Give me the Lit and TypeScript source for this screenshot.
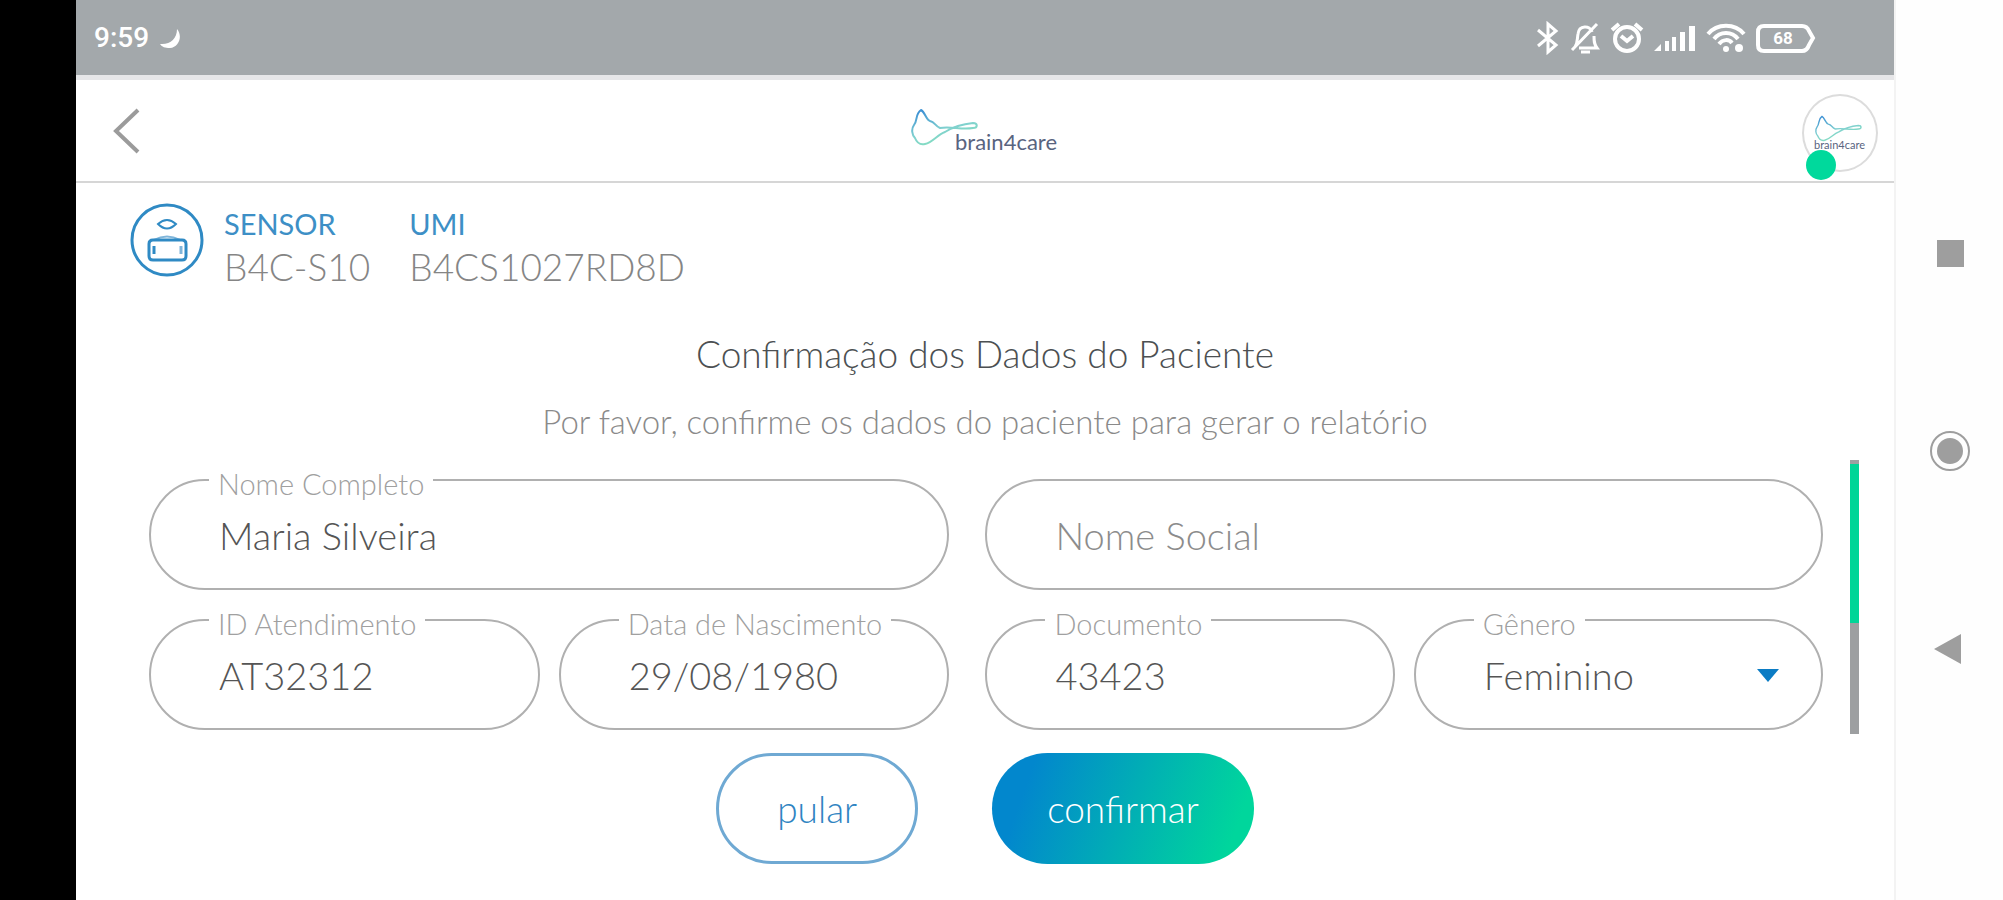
import { LitElement, html, css, svg } from "lit";

/* Brand curve shared by the header logo and the avatar */
const brandCurve = svg`
  <path
    d="M10 2 C4 6 7 12 3 17 C0 21 1 27 4 30 C6 35 10 37 14 36 C22 34 26 27 34 24 C42 19 52 16 62 15 C67 15 67 20 62 20 C50 22 40 18 29 20 C24 18 24 14 19 13 C15 12 14 4 10 2 Z"
    fill="none" stroke="url(#curve)" stroke-width="2" stroke-linejoin="round" />`;

const curveGradient = svg`
  <defs>
    <linearGradient id="curve" x1="0" y1="0" x2="0.5" y2="1">
      <stop offset="0.1" stop-color="#3f93d4" />
      <stop offset="0.6" stop-color="#7fcfd0" />
      <stop offset="1" stop-color="#86e0bf" />
    </linearGradient>
  </defs>`;

class StatusBar extends LitElement {
  static styles = css`
    :host {
      display: flex;
      align-items: center;
      justify-content: space-between;
      height: 75px;
      padding: 0 78px 0 18px;
      background: #a3a8ab;
      color: #fff;
      font: 500 28px/32px Roboto, sans-serif;
    }
    .group {
      display: flex;
      align-items: center;
      gap: 10px;
    }
    svg {
      display: block;
    }
  `;

  render() {
    return html`
      <div class="group">
        <span>9:59</span>
        <svg width="22" height="22" viewBox="0 0 22 22" fill="#fff">
          <path d="M18 2 C24 9 20 20 11 21 C6 21 3 20 1 17 C11 18 18 12 18 2Z" />
        </svg>
      </div>
      <div class="group">
        <svg width="24" height="34" viewBox="0 0 24 34" fill="none" stroke="#fff" stroke-width="3">
          <path d="M2 9 L20 24 L12 31 V3 L20 10 L2 25" />
        </svg>
        <svg width="30" height="34" viewBox="0 0 30 34" fill="none" stroke="#fff" stroke-width="3">
          <path d="M5 26 C8 21 7 18 8 13 C9 4 20 4 22 11 M24 15 C24 20 24 23 27 27 H9 M27 3 L2 29" />
          <path d="M11 31 H20" />
        </svg>
        <svg width="34" height="34" viewBox="0 0 34 34" fill="none" stroke="#fff" stroke-width="4">
          <circle cx="17" cy="18" r="12" />
          <path d="M2 9 L9 3 M25 3 L32 9 M11 15 L17 20 L23 15" />
        </svg>
        <svg width="42" height="34" viewBox="0 0 42 34" fill="#fff">
          <path d="M0 30 L7 23 V30Z M11 20 H15 V30 H11Z M18 16 H22 V30 H18Z M26 11 H31 V30 H26Z M35 5 H41 V30 H35Z" />
        </svg>
        <svg width="40" height="34" viewBox="0 0 40 34" fill="none" stroke="#fff" stroke-width="4">
          <path d="M2 13 C11 2 29 2 38 13 M8 18 C14 10 26 10 32 18 M13 23 C17 18 23 18 26 22" />
          <circle cx="20" cy="28" r="3" fill="#fff" stroke="none" />
          <circle cx="33" cy="27" r="4" fill="#fff" stroke="none" />
        </svg>
        <svg width="60" height="34" viewBox="0 0 60 34" fill="none" stroke="#fff" stroke-width="4">
          <path d="M8 5 H46 Q51 5 53 10 L57 17 L53 24 Q51 30 46 30 H8 Q2 30 2 24 V11 Q2 5 8 5Z" />
          <text x="27" y="23" text-anchor="middle" fill="#fff" stroke="none" font-size="17" font-weight="700">68</text>
        </svg>
      </div>
    `;
  }
}
customElements.define("status-bar", StatusBar);

class AppHeader extends LitElement {
  static styles = css`
    :host {
      display: grid;
      grid-template-columns: 1fr auto 1fr;
      align-items: center;
      height: 108px;
      padding: 0 16px 0 28px;
      box-sizing: border-box;
      border-top: 5px solid #e6e6e8;
      border-bottom: 2px solid #d6d6d6;
    }
    button {
      display: grid;
      justify-self: start;
      padding: 8px;
      border: 0;
      background: none;
    }
    svg {
      display: block;
    }
    .avatar {
      position: relative;
      justify-self: end;
      align-self: end;
      display: grid;
      place-items: center;
      width: 76px;
      height: 78px;
      margin-bottom: 9px;
      box-sizing: border-box;
      border: 2px solid #dcdcdc;
      border-radius: 50%;
    }
    .online {
      position: absolute;
      left: 2px;
      bottom: -10px;
      width: 30px;
      height: 30px;
      border-radius: 50%;
      background: #00d99c;
    }
    .logo {
      margin-right: 12px;
    }
    text {
      font: 400 22px Lato, sans-serif;
      fill: #59647f;
    }
  `;

  render() {
    return html`
      <button aria-label="Voltar">
        <svg width="28" height="46" viewBox="0 0 28 46" fill="none" stroke="#9b9b9b" stroke-width="4">
          <path d="M26 2 L4 23 L26 44" />
        </svg>
      </button>
      <svg class="logo" width="148" height="46" viewBox="0 0 148 46">
        ${curveGradient}${brandCurve}
        <text x="44" y="42">brain4care</text>
      </svg>
      <div class="avatar">
        <svg width="56" height="38" viewBox="0 0 112 76">
          ${curveGradient}
          <g transform="translate(6 2) scale(1.4)">${brandCurve}</g>
          <text x="4" y="70">brain4care</text>
        </svg>
        <span class="online"></span>
      </div>
    `;
  }
}
customElements.define("app-header", AppHeader);

class SensorInfo extends LitElement {
  static styles = css`
    :host {
      display: flex;
      align-items: flex-start;
      gap: 19px;
      font: 300 37px/44px Lato, sans-serif;
      color: #858585;
    }
    svg {
      display: block;
    }
    dl {
      display: flex;
      gap: 39px;
      margin: 0;
    }
    dt {
      font: 400 29px/42px Lato, sans-serif;
      color: #3d8fc6;
    }
    dd {
      margin: 0;
    }
  `;

  render() {
    return html`
      <svg width="75" height="75" viewBox="0 0 75 75" fill="none" stroke="#2f8ac4" stroke-width="3">
        <circle cx="37" cy="37" r="35" />
        <path d="M28 21 Q37 13 46 21 Q37 30 28 21Z" stroke-width="2" />
        <path d="M24 37 Q37 30 50 37" stroke-width="2" stroke="#7fb5da" />
        <path d="M23 37 H52 Q56 37 56 41 V53 Q56 57 52 57 H23 Q19 57 19 53 V41 Q19 37 23 37Z" />
        <path d="M24 43 V51" />
        <path d="M51 43 V51" stroke="#7fb5da" />
      </svg>
      <dl>
        <div><dt>SENSOR</dt><dd>B4C-S10</dd></div>
        <div><dt>UMI</dt><dd>B4CS1027RD8D</dd></div>
      </dl>
    `;
  }
}
customElements.define("sensor-info", SensorInfo);

class PatientForm extends LitElement {
  static styles = css`
    :host {
      display: flex;
      gap: 27px;
      padding: 0 35px 0 73px;
    }
    .fields {
      flex: 1;
      display: grid;
      grid-template-columns: 800fr 837fr;
      gap: 29px 36px;
      padding: 19px 0 4px;
    }
    .pair {
      display: grid;
      grid-template-columns: 1fr 1fr;
      gap: 19px;
    }
    .field {
      position: relative;
      min-width: 0;
    }
    label {
      position: absolute;
      left: 60px;
      top: -13px;
      padding: 0 9px;
      background: #fff;
      color: #a0a0a0;
      font: 300 29px/36px Lato, sans-serif;
      white-space: nowrap;
    }
    input,
    select {
      display: block;
      width: 100%;
      height: 111px;
      box-sizing: border-box;
      margin: 0;
      padding: 0 68px;
      border: 2px solid #b0b0b0;
      border-radius: 56px;
      background: #fff;
      color: #555;
      font: 300 38px/44px Lato, sans-serif;
      appearance: none;
      outline: none;
    }
    input::placeholder {
      color: #8c8c8c;
      opacity: 1;
    }
    .arrow {
      position: absolute;
      right: 44px;
      top: 50px;
      pointer-events: none;
    }
    .track {
      width: 9px;
      padding-top: 4px;
      box-sizing: border-box;
      background: #9d9fa1;
    }
    .thumb {
      height: 59%;
      background: #00d597;
    }
  `;

  render() {
    return html`
      <div class="fields">
        <div class="field">
          <input id="name" value="Maria Silveira" />
          <label for="name">Nome Completo</label>
        </div>
        <div class="field">
          <input id="social" placeholder="Nome Social" aria-label="Nome Social" />
        </div>
        <div class="pair">
          <div class="field">
            <input id="visit" value="AT32312" />
            <label for="visit">ID Atendimento</label>
          </div>
          <div class="field">
            <input id="birth" value="29/08/1980" />
            <label for="birth">Data de Nascimento</label>
          </div>
        </div>
        <div class="pair">
          <div class="field">
            <input id="document" value="43423" />
            <label for="document">Documento</label>
          </div>
          <div class="field">
            <select id="gender">
              <option>Feminino</option>
            </select>
            <label for="gender">Gênero</label>
            <svg class="arrow" width="22" height="13" viewBox="0 0 22 13">
              <path d="M0 0 H22 L11 13Z" fill="#0b7cc4" />
            </svg>
          </div>
        </div>
      </div>
      <div class="track"><div class="thumb"></div></div>
    `;
  }
}
customElements.define("patient-form", PatientForm);

class NavRail extends LitElement {
  static styles = css`
    :host {
      display: flex;
      flex-direction: column;
      align-items: center;
      gap: 158px;
      padding-top: 233px;
    }
    button {
      display: grid;
      padding: 0;
      border: 0;
      background: none;
    }
  `;

  render() {
    return html`
      <button aria-label="Recentes">
        <svg width="40" height="40" viewBox="0 0 40 40"><path d="M7 7 H34 V34 H7Z" fill="#9e9e9e" /></svg>
      </button>
      <button aria-label="Início">
        <svg width="40" height="40" viewBox="0 0 40 40">
          <circle cx="20" cy="20" r="19" fill="none" stroke="#9e9e9e" stroke-width="2" />
          <circle cx="20" cy="20" r="13" fill="#9e9e9e" />
        </svg>
      </button>
      <button aria-label="Voltar">
        <svg width="40" height="40" viewBox="0 0 40 40"><path d="M4 20 L31 5 V35Z" fill="#9e9e9e" /></svg>
      </button>
    `;
  }
}
customElements.define("nav-rail", NavRail);

class AppRoot extends LitElement {
  static styles = css`
    :host {
      display: grid;
      grid-template-columns: 76px 1fr 107px;
      min-height: 100vh;
      background: #fefefe;
      font-family: Lato, sans-serif;
    }
    .bezel {
      background: #000;
    }
    .screen {
      background: #fff;
      border-right: 2px solid #f3f3f3;
    }
    sensor-info {
      padding: 20px 54px 0;
    }
    h1 {
      margin: 41px 0 0;
      text-align: center;
      font: 300 37px/48px Lato, sans-serif;
      color: #4c5052;
    }
    .hint {
      margin: 23px 0 19px;
      text-align: center;
      font: 300 33px/40px Lato, sans-serif;
      color: #8a8a8a;
    }
    .actions {
      display: flex;
      justify-content: center;
      gap: 74px;
      padding: 19px 0 35px;
    }
    .actions button {
      height: 111px;
      padding: 0 55px;
      border: 0;
      border-radius: 56px;
      font: 300 37px/44px Lato, sans-serif;
    }
    .actions .skip {
      padding: 0 58px;
      border: 3px solid #6fa9d3;
      background: #fff;
      color: #2f84c2;
    }
    .actions .confirm {
      background: linear-gradient(110deg, #0287cd 15%, #00d69c 90%);
      color: #fff;
    }
  `;

  render() {
    return html`
      <div class="bezel"></div>
      <div class="screen">
        <status-bar></status-bar>
        <app-header></app-header>
        <main>
          <sensor-info></sensor-info>
          <h1>Confirmação dos Dados do Paciente</h1>
          <p class="hint">Por favor, confirme os dados do paciente para gerar o relatório</p>
          <patient-form></patient-form>
          <div class="actions">
            <button class="skip">pular</button>
            <button class="confirm">confirmar</button>
          </div>
        </main>
      </div>
      <nav-rail></nav-rail>
    `;
  }
}
customElements.define("app-root", AppRoot);
